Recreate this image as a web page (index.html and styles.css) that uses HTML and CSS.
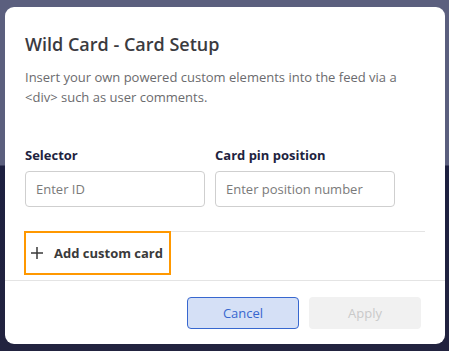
FILE: index.html
```html
<!DOCTYPE html>
<html lang="en">
<head>
    <meta charset="UTF-8">
    <meta name="viewport" content="width=device-width, initial-scale=1.0">
    <title>Wild Card - Card Setup</title>
    <link rel="stylesheet" href="styles.css">
</head>
<body>
    <div class="backdrop">
        <div class="modal">
            <div class="modal-body">
                <h2>Wild Card - Card Setup</h2>
                <p class="intro">Insert your own powered custom elements into the feed via a &lt;div&gt; such as user comments.</p>
                <div class="fields">
                    <div class="input-field">
                        <label for="selector">Selector</label>
                        <input type="text" id="selector" placeholder="Enter ID">
                    </div>
                    <div class="input-field">
                        <label for="pin">Card pin position</label>
                        <input type="text" id="pin" placeholder="Enter position number">
                    </div>
                </div>
                <div class="add-row">
                    <button class="add-card" type="button">
                        <svg width="14" height="14" viewBox="0 0 14 14"><path d="M7 1v12M1 7h12" stroke="#3a3a3a" stroke-width="1.5" fill="none"/></svg>
                        Add custom card
                    </button>
                </div>
            </div>
            <div class="modal-footer">
                <button class="btn btn-cancel" type="button">Cancel</button>
                <button class="btn btn-apply" type="button" disabled>Apply</button>
            </div>
        </div>
    </div>
</body>
</html>
```

FILE: styles.css
```css
body {
    margin: 0;
    font-family: "Open Sans", sans-serif;
}
.backdrop {
    height: 351px;
    box-sizing: border-box;
    padding: 7px 4px 0 5px;
    background: linear-gradient(180deg, #5b5f7e 0, #5b5f7e 165px, #1d2040 166px, #22233f 100%);
}
.modal {
    height: 337px;
    background: #fff;
    border-radius: 9px;
    display: flex;
    flex-direction: column;
}
.modal-body {
    padding: 24px 20px 0 20px;
}
h2 {
    margin: 0;
    font-size: 18px;
    font-weight: 600;
    color: #3b3b3f;
    line-height: 26px;
}
.intro {
    margin: 10px 0 0;
    font-size: 13px;
    line-height: 20px;
    color: #6b6b6e;
}
.fields {
    display: flex;
    gap: 10px;
    margin-top: 38px;
}
.input-field label {
    display: block;
    font-size: 13px;
    font-weight: 700;
    color: #1e2340;
    line-height: 20px;
    margin-bottom: 6px;
}
.input-field input {
    width: 180px;
    height: 36px;
    box-sizing: border-box;
    padding: 0 10px;
    border: 1px solid #cfcfcf;
    border-radius: 4px;
    font-family: inherit;
    font-size: 13px;
}
.input-field input::placeholder {
    color: #7a7a7a;
}
.add-row {
    margin-top: 24px;
    border-top: 1px solid #e4e4e4;
}
.add-card {
    display: flex;
    align-items: center;
    gap: 10px;
    height: 44px;
    margin-top: -1px;
    margin-left: -1px;
    padding: 0 6px 0 4px;
    background: #fff;
    border: 2px solid #ff9800;
    font-family: inherit;
    font-size: 13px;
    font-weight: 700;
    color: #3a3a3a;
    cursor: pointer;
}
.modal-footer {
    margin-top: auto;
    border-top: 1px solid #e4e4e4;
    display: flex;
    justify-content: flex-end;
    gap: 10px;
    padding: 16px 24px 15px;
}
.btn {
    width: 112px;
    height: 32px;
    border-radius: 4px;
    font-family: inherit;
    font-size: 13px;
}
.btn-cancel {
    background: #d5e0f6;
    border: 1px solid #3767cf;
    color: #3767cf;
    cursor: pointer;
}
.btn-apply {
    background: #f1f1f1;
    border: none;
    color: #c9c9c9;
}
```
